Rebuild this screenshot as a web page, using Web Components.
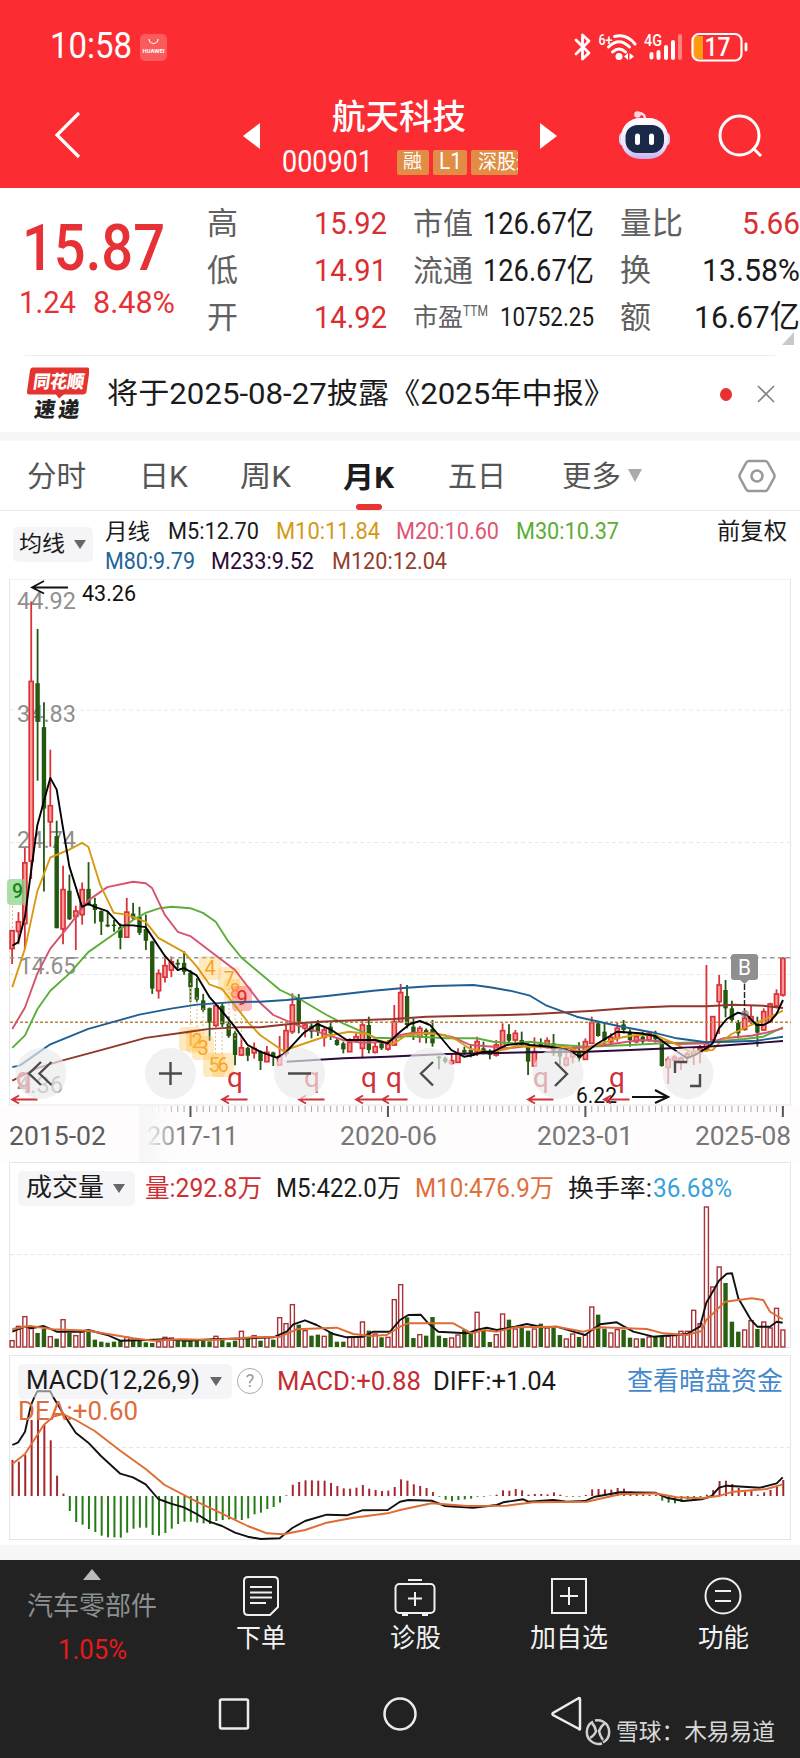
<!DOCTYPE html>
<html lang="zh-CN">
<head>
<meta charset="utf-8">
<title>航天科技 000901</title>
<style>
    body {
        margin: 0;
        width: 800px;
        background: #fff;
        color: #1b1b1b;
        font-family: Roboto, "Noto Sans CJK SC", sans-serif;
        overflow-x: hidden;
    }
</style>
</head>
<body>
<stock-app></stock-app>

<script>
// Text squeezed or stretched to a fixed width: w = width, gap = left margin, s = font size
class FitText extends HTMLElement {
    constructor() {
        super();
        this.attachShadow({ mode: 'open' });
        this.shadowRoot.innerHTML = `
            <style>
                :host { display: block; flex: none; line-height: 1.2; white-space: nowrap; }
                span { display: inline-block; transform-origin: 0 50%; }
            </style>
            <span><slot></slot></span>
        `;
    }

    connectedCallback() {
        const width = Number(this.getAttribute('w'));
        if (this.hasAttribute('s')) this.style.fontSize = this.getAttribute('s') + 'px';
        if (this.hasAttribute('gap')) this.style.marginLeft = this.getAttribute('gap') + 'px';
        if (this.hasAttribute('c')) this.style.color = this.getAttribute('c');
        const span = this.shadowRoot.querySelector('span');
        const natural = span.getBoundingClientRect().width;
        this.style.width = width + 'px';
        if (natural) span.style.transform = `scaleX(${width / natural})`;
    }
}

class StatusBar extends HTMLElement {
    constructor() {
        super();
        this.attachShadow({ mode: 'open' });
        this.shadowRoot.innerHTML = `
            <style>
                :host { display: flex; align-items: center; height: 92px; box-sizing: border-box; padding: 2px 52px 0 50px; background: #fb2d33; color: #fff; }
                .left, .right { display: flex; align-items: center; }
                .right { margin-left: auto; }
                svg { display: block; }
            </style>
            <div class="left">
                <fit-text w="82" s="36">10:58</fit-text>
                <svg width="27" height="27" viewBox="0 0 27 27" style="margin-left:8px">
                    <rect width="27" height="27" rx="5" fill="#fb5b5c"/>
                    <path d="M9 5a4.500 4.500 0 0 0 9 0" fill="none" stroke="#fff" stroke-width="1.200"/>
                    <text x="2.500" y="18.500" font-size="6" font-weight="700" fill="#fff" textLength="22" lengthAdjust="spacingAndGlyphs">HUAWEI</text>
                </svg>
            </div>
            <div class="right">
                <svg width="176" height="34" viewBox="571 29 176 34" fill="none" stroke="#fff">
                    <path d="M575 39l13 13-6.500 6V34l6.500 6-13 13" stroke-width="2.800" stroke-linejoin="round" stroke-linecap="round"/>
                    <text x="597.500" y="44" font-size="15" font-weight="500" fill="#fff" stroke="none" textLength="14" lengthAdjust="spacingAndGlyphs">6+</text>
                    <path d="M613.500 35.500q12-3 20.500 7.500M607.500 46q10.500-10.500 21 0M611.500 51q6.500-6 13 0" stroke-width="3" stroke-linecap="round"/>
                    <circle cx="618" cy="55.500" r="3.500" fill="#fff" stroke="none"/>
                    <path d="M627 52v7l-4-3.500zM628.500 52v7l4.500-3.500z" fill="#fff" stroke="none"/>
                    <text x="643" y="45" font-size="17" font-weight="500" fill="#fff" stroke="none" textLength="18" lengthAdjust="spacingAndGlyphs">4G</text>
                    <path d="M650.500 53v3.500M657.500 51v6M665 46v11M672 41v16" stroke-width="4" stroke-linecap="round"/>
                    <path d="M679 35v22" stroke="#ff8080" stroke-width="4" stroke-linecap="round"/>
                    <path d="M702 35h-6q-4 0-4 5v13q0 5 4 5h6z" fill="#ff9b12" stroke="none"/>
                    <rect x="691.500" y="33" width="49" height="26.500" rx="6.500" stroke-width="2.200"/>
                    <path d="M745 43v6" stroke-width="2.800" stroke-linecap="round"/>
                    <text x="703.500" y="55" font-size="25" font-weight="500" fill="#fff" stroke="none" textLength="26" lengthAdjust="spacingAndGlyphs">17</text>
                </svg>
            </div>
        `;
    }
}

class TitleBar extends HTMLElement {
    constructor() {
        super();
        this.attachShadow({ mode: 'open' });
        this.shadowRoot.innerHTML = `
            <style>
                :host { display: flex; align-items: flex-start; height: 96px; background: #fb2d33; color: #fff; box-sizing: border-box; padding-left: 54px; }
                svg { display: block; flex: none; }
                .name { width: 262px; padding-top: 6px; }
                .code { display: flex; align-items: center; height: 26px; margin-top: 13px; }
                .tag { flex: none; height: 25px; display: flex; align-items: center; background: #e18d45; border-radius: 2px; margin-right: 4px; overflow: hidden; }
            </style>
            <svg width="28" height="48" viewBox="0 0 28 48" style="margin-top:19px"><path d="M25 2L3 24l22 22" fill="none" stroke="#fff" stroke-width="3.200"/></svg>
            <svg width="17" height="26" viewBox="0 0 17 26" style="margin:31px 22px 0 161px"><path d="M17 0v26L0 13z" fill="#fff"/></svg>
            <div class="name">
                <fit-text w="134" s="34" gap="50" style="font-weight:500;line-height:38px">航天科技</fit-text>
                <div class="code">
                    <fit-text w="91" s="31" style="line-height:26px">000901</fit-text>
                    <div class="tag" style="width:32px;margin-left:24px"><fit-text w="19" s="19" gap="6">融</fit-text></div>
                    <div class="tag" style="width:34px"><fit-text w="23" s="23" gap="6">L1</fit-text></div>
                    <div class="tag" style="width:47px"><fit-text w="57" s="20" gap="7">深股通</fit-text></div>
                </div>
            </div>
            <svg width="17" height="26" viewBox="0 0 17 26" style="margin:31px 0 0 -4px"><path d="M0 0v26L17 13z" fill="#fff"/></svg>
            <svg width="54" height="52" viewBox="616 108 54 52" style="margin:17px 0 0 60px">
                <defs><linearGradient id="h" x1="0" y1="0" x2="0" y2="1"><stop offset="0" stop-color="#fff"/><stop offset=".7" stop-color="#e9e2ff"/><stop offset="1" stop-color="#c3b2ee"/></linearGradient></defs>
                <path d="M644 120q1-8-7-8" fill="none" stroke="#ffe3ea" stroke-width="2.500"/>
                <circle cx="636.500" cy="113.500" r="3.300" fill="#ffd3dc"/>
                <rect x="618" y="131" width="51" height="14" rx="5" fill="#dccdfa"/>
                <rect x="620" y="117" width="47" height="41" rx="19" fill="url(#h)"/>
                <rect x="624.500" y="124" width="38.500" height="28" rx="12" fill="#1b2948"/>
                <rect x="634" y="132.500" width="5" height="11.500" rx="2.500" fill="#fff"/><rect x="648" y="132.500" width="5" height="11.500" rx="2.500" fill="#fff"/>
            </svg>
            <svg width="46" height="46" viewBox="716 113 46 46" style="margin:21px 0 0 46px">
                <circle cx="738.500" cy="135.500" r="19.500" fill="none" stroke="#fff" stroke-width="3"/>
                <path d="M752 148l8 8" stroke="#fff" stroke-width="3"/>
            </svg>
        `;
    }
}

class QuotePanel extends HTMLElement {
    constructor() {
        super();
        this.attachShadow({ mode: 'open' });
        this.shadowRoot.innerHTML = `
            <style>
                :host { display: flex; height: 167px; box-sizing: border-box; padding-top: 12px; position: relative; font-size: 32px; }
                .price { width: 208px; color: #e63236; }
                .row, .change { display: flex; align-items: center; }
                .row { height: 47px; }
                .k { color: #606060; font-weight: 400; }
                .red { color: #d92f33; }
                .v { font-weight: 500; }
                i { position: absolute; right: 6px; bottom: 10px; border: solid; border-width: 0 0 13px 12px; border-color: transparent transparent #c9c9c9; }
            </style>
            <div class="price">
                <fit-text class="v" w="143" s="65" gap="22" style="line-height:96px">15.87</fit-text>
                <div class="change"><fit-text w="57" s="32" gap="19" style="line-height:12px">1.24</fit-text><fit-text w="82" s="32" gap="17" style="line-height:12px">8.48%</fit-text></div>
            </div>
            <div>
                <div class="row"><fit-text class="k" w="31" s="31">高</fit-text><fit-text class="red" w="73" gap="76">15.92</fit-text><fit-text class="k" w="60" s="30" gap="26">市值</fit-text><fit-text w="111" gap="10" s="31">126.67亿</fit-text><fit-text class="k" w="63" s="31" gap="26">量比</fit-text><fit-text class="red" w="58" gap="59">5.66</fit-text></div>
                <div class="row"><fit-text class="k" w="31" s="31">低</fit-text><fit-text class="red" w="73" gap="76">14.91</fit-text><fit-text class="k" w="60" s="30" gap="26">流通</fit-text><fit-text w="111" gap="10" s="31">126.67亿</fit-text><fit-text class="k" w="31" s="31" gap="26">换</fit-text><fit-text w="98" gap="51">13.58%</fit-text></div>
                <div class="row"><fit-text class="k" w="31" s="31">开</fit-text><fit-text class="red" w="73" gap="76">14.92</fit-text><fit-text class="k" w="50" s="25" gap="26">市盈</fit-text><fit-text class="k" w="25" s="14" style="margin-bottom:12px">TTM</fit-text><fit-text w="94" gap="12" s="26">10752.25</fit-text><fit-text class="k" w="31" s="31" gap="26">额</fit-text><fit-text w="106" gap="43">16.67亿</fit-text></div>
            </div>
            <i></i>
        `;
    }
}

class NewsRow extends HTMLElement {
    constructor() {
        super();
        this.attachShadow({ mode: 'open' });
        this.shadowRoot.innerHTML = `
            <style>
                :host { display: flex; align-items: center; height: 76px; margin: 0 25px; border-top: 1px solid #ededed; }
                .dot { width: 13px; height: 13px; border-radius: 50%; background: #e8302f; margin-left: 105px; }
                svg { flex: none; }
            </style>
            <svg width="64" height="56" viewBox="25 366 64 56">
                <path d="M33 367.500h54q3 0 2.500 3l-3 21q-.5 3-3.500 3H64l-5 4-3-4H30q-3.500 0-3-3l3-21q.5-3 3-3z" fill="#e5342f"/>
                <g font-family="Noto Sans CJK SC" font-weight="900" transform="skewX(-8)">
                    <text x="87" y="388" font-size="18" fill="#fff" textLength="51" lengthAdjust="spacingAndGlyphs">同花顺</text>
                    <text x="92" y="417" font-size="21" fill="#222" textLength="45">速递</text>
                </g>
            </svg>
            <fit-text w="508" s="29" gap="18"><slot></slot></fit-text>
            <div class="dot"></div>
            <svg width="18" height="18" style="margin-left:25px"><path d="M1 1l16 16M17 1L1 17" stroke="#858585" stroke-width="1.700"/></svg>
        `;
    }
}

class PeriodTabs extends HTMLElement {
    constructor() {
        super();
        this.attachShadow({ mode: 'open' });
        this.shadowRoot.innerHTML = `
            <style>
                :host { display: flex; align-items: center; height: 69px; border-top: 9px solid #f7f7f7; border-bottom: 1px solid #e9e9e9; color: #555; font-size: 29px; }
                fit-text { padding-top: 3px; }
                .on { height: 69px; display: flex; flex-direction: column; align-items: center; justify-content: space-between; color: #1c1c1c; font-weight: 700; margin-left: 52px; }
                .on::after { content: ""; width: 26px; height: 6px; border-radius: 3px; background: #e83234; }
                .on fit-text { line-height: 69px; height: 57px; }
                .more { border: solid transparent; border-width: 13px 7.500px 0; border-top-color: #aaa; margin-left: 7px; }
            </style>
            <fit-text w="59" gap="27">分时</fit-text>
            <fit-text w="49" gap="53">日K</fit-text>
            <fit-text w="51" gap="52">周K</fit-text>
            <div class="on"><fit-text w="51">月K</fit-text></div>
            <fit-text w="58" gap="54">五日</fit-text>
            <fit-text w="59" gap="56">更多</fit-text>
            <div class="more"></div>
            <svg width="38" height="34" viewBox="0 0 38 34" fill="none" stroke="#999" stroke-width="2.600" style="margin-left:96px">
                <path d="M11 2h16q2 0 3 2l6 11q1 2 0 4l-6 11q-1 2-3 2H11q-2 0-3-2L2 19q-1-2 0-4L8 4q1-2 3-2z"/><circle cx="19" cy="17" r="5.500"/>
            </svg>
        `;
    }
}

// Grey chip with a caret, used to pick an indicator
class PickChip extends HTMLElement {
    constructor() {
        super();
        this.attachShadow({ mode: 'open' });
        this.shadowRoot.innerHTML = `
            <style>
                :host { display: flex; flex: none; align-items: center; justify-content: space-between; box-sizing: border-box; height: 35px; padding: 0 10px 0 8px; background: #f5f4f6; border-radius: 5px; }
                i { border: solid transparent; border-width: 9px 6.500px 0; border-top-color: #666; }
            </style>
            <slot></slot><i></i>
        `;
    }
}

class MaLegend extends HTMLElement {
    constructor() {
        super();
        this.attachShadow({ mode: 'open' });
        this.shadowRoot.innerHTML = `
            <style>
                :host { display: flex; height: 68px; box-sizing: border-box; padding-left: 13px; font-size: 24px; }
                pick-chip { width: 80px; margin-top: 16px; padding: 0 7px 0 6px; }
                .row { display: flex; height: 29.500px; align-items: center; }
                .lines { margin: 6px 0 0 12px; }
            </style>
            <pick-chip><fit-text w="46" s="22">均线</fit-text></pick-chip>
            <div class="lines">
                <div class="row"><fit-text w="45" s="22">月线</fit-text><fit-text w="91" gap="18">M5:12.70</fit-text><fit-text w="104" gap="17" c="#d39a16">M10:11.84</fit-text><fit-text w="103" gap="16" c="#dd5674">M20:10.60</fit-text><fit-text w="103" gap="17" c="#5bad35">M30:10.37</fit-text><fit-text w="70" gap="98" s="23">前复权</fit-text></div>
                <div class="row"><fit-text w="90" c="#20649a">M80:9.79</fit-text><fit-text w="103" gap="16" c="#2b0b35">M233:9.52</fit-text><fit-text w="115" gap="18" c="#943d2d">M120:12.04</fit-text></div>
            </div>
        `;
    }
}

const FIRST_X = 12.100;
const STEP = 6.370;
const RED = '#d93338';
const GREEN = '#24570f';

// Monthly candles: colour, high, body top, body bottom, low
const EARLY = `r 1008 1010 1060 1103|r 958 985 1012 1048|r 778 820 990 1062|r 88 312 815 865|g 165 317 425 590|g 370 440 668 900|r 503 660 705 775|g 702 745 1003 1003|r 828 895 1005 1048|g 853 898 978 980|r 940 955 970 1064|r 875 895 965 993|g 818 893 935 940|g 918 935 952 990|g 953 955 985 1022|g 955 993 998 1000|g 980 993 997 1013|g 990 1000 1030 1062|r 918 958 1028 1028|g 932 962 975 980|g 943 970 1016 1022|g 965 1005 1038 1064|g 1038 1040 1172 1187|r 1118 1130 1178 1200|r 1080 1108 1140 1155|r 1082 1097 1120 1140|g 1090 1100 1105 1115|g 1067 1100 1125 1133|g 1120 1128 1168 1210|g 1143 1170 1203 1210|g 1187 1205 1232 1237|g 1225 1227 1268 1318|r 1215 1220 1275 1280|g 1210 1220 1272 1280|g 1250 1270 1305 1310|g 1290 1297 1358 1387|r 1308 1338 1358 1360|g 1335 1338 1360 1375|r 1323 1340 1352 1368|g 1345 1348 1375 1400`;
const LATER = `r 438 457 485 485|g 455 457 470 498|r 408 470 495 497|r 375 392 460 470|r 280 315 395 402|g 282 297 365 400|r 370 375 385 412|g 370 377 395 415|g 360 370 395 408|r 380 390 412 440|g 368 380 400 420|g 415 420 435 437|g 425 430 448 460|r 415 427 455 455|r 400 410 423 425|r 360 375 445 475|g 350 375 450 460|r 427 440 457 460|g 422 430 445 450|r 420 432 447 452|r 315 365 435 438|r 252 278 365 368|g 255 288 375 385|g 355 380 400 420|r 378 385 410 428|g 385 390 405 430|g 360 387 430 440|g 468 470 475 508|g 470 475 485 490|r 460 482 490 495|r 445 460 487 487|g 440 450 458 465|g 435 450 460 472|r 410 425 455 468|g 425 445 460 463|g 448 452 465 478|r 420 435 465 470|r 370 392 440 445|g 373 402 422 430|r 390 400 420 435|g 395 420 435 440|g 430 440 485 525|r 412 455 498 500|g 415 430 440 445|r 412 422 440 445|g 402 430 460 468|g 440 450 470 495|r 450 475 495 500|r 440 450 470 490|g 427 450 475 485|r 415 425 478 480|r 350 368 430 432|g 365 370 408 410|g 368 395 420 432|r 400 412 425 435|r 368 385 415 425|g 360 373 390 400|g 388 395 420 440|r 400 410 425 430|g 395 410 425 435|r 393 400 420 425|g 392 405 418 428|g 418 425 498 500|r 470 478 502 552|r 465 472 480 500|r 470 475 485 510|r 455 462 470 490|r 445 455 465 495|r 435 445 455 490|r 195 430 450 455|r 350 350 420 425|r 225 255 305 402|g 240 270 325 352|g 302 325 360 367|g 360 367 400 415|r 330 355 388 392|r 315 350 365 372|g 350 370 398 440|r 325 335 390 392|r 308 312 365 368|r 268 282 318 325|r 172 175 285 290`;

function readCandles(text, top, scale) {
    return text.split('|').map(row => {
        const [color, ...values] = row.split(' ');
        return [color, ...values.map(v => top + v / scale)];
    });
}

const CANDLES = [...readCandles(EARLY, 570, 2.800), ...readCandles(LATER, 900, 3)];
const colorAt = i => CANDLES[i][0] === 'r';

// Joins pieces of a curve, each with its own origin and scale
function curve(color, pieces, width = 1.900) {
    const points = [];
    for (const [x0, y0, sy, text] of pieces) {
        for (const pair of text.split(' ')) {
            const [x, y] = pair.split(',').map(Number);
            points.push(`${(x0 + x / 3).toFixed(1)},${(y0 + y / sy).toFixed(1)}`);
        }
    }
    return `<polyline points="${points.join(' ')}" fill="none" stroke="${color}" stroke-width="${width}" stroke-linejoin="round"/>`;
}

const label = (x, y, size, width, text, extra = '') =>
    `<text x="${x}" y="${y}" font-size="${size}" textLength="${width}" lengthAdjust="spacingAndGlyphs" ${extra}>${text}</text>`;

class PriceChart extends HTMLElement {
    constructor() {
        super();
        this.attachShadow({ mode: 'open' });
        this.shadowRoot.innerHTML = `
            <style>
                :host { display: block; height: 583px; }
                svg { display: block; }
            </style>
            <svg width="800" height="583" viewBox="0 579 800 583">${this.draw()}</svg>
        `;
    }

    draw() {
        let out = `<rect x="0" y="1106" width="800" height="56" fill="#fefcfd"/>
            <rect x="9.500" y="579" width="781" height="526" fill="#fff" stroke="#e6e6e6"/>
            <path d="M10 710h780M10 842.500h780M10 974.500h780" stroke="#e8e8e8" stroke-dasharray="4 3"/>
            <g fill="#8f8f8f">${label(17, 609, 24.500, 59, '44.92')}${label(17, 722, 24.500, 59, '34.83')}${label(17, 848, 24.500, 59, '24.74')}${label(19, 973.500, 24.500, 57, '14.65')}${label(17, 1092.500, 24.500, 46, '4.36')}</g>`;
        CANDLES.forEach(([color, high, top, bottom, low], i) => {
            const x = FIRST_X + STEP * i;
            const h = Math.max(bottom - top, 1.500);
            if (color === 'r') {
                out += `<path d="M${x} ${high}V${low}" stroke="${RED}" stroke-width="1.800"/><rect x="${x - 2}" y="${top}" width="4" height="${h}" fill="#ff9896" stroke="${RED}" stroke-width="1.700"/>`;
            } else {
                out += `<path d="M${x} ${high}V${low}" stroke="${GREEN}" stroke-width="1.800"/><rect x="${x - 2.200}" y="${top}" width="4.400" height="${h}" fill="${GREEN}"/>`;
            }
        });
        out += `<path d="M10 957.700h781" stroke="#999" stroke-width="1.400" stroke-dasharray="4.500 3.500"/>
            <path d="M10 1022.300h781" stroke="#b98442" stroke-width="1.400" stroke-dasharray="3 2"/>`;

        // Nine-turn counters
        out += '<path d="M12.500 906v24M190.500 983v44M197 997v30M203 1008v26M215.500 1032v22M222 1032v22M229 988v42M235 1006v34M241.500 1010v32" stroke="#e5bd84" stroke-width="1" stroke-dasharray="2 2"/>';
        out += `<rect x="7" y="879" width="19" height="26" rx="4" fill="#8ed68e" opacity=".75"/>${label(12, 898, 20, 11, '9', 'fill="#128a15" font-weight="500"')}`;
        const marks = [[4, 210, 968], [7, 229, 979], [8, 235, 991], [1, 190, 1039], [2, 197, 1041], [3, 203, 1048], [5, 214, 1065], [6, 223, 1065]];
        for (const [n, x, y] of marks) {
            out += `<rect x="${x - 11}" y="${y - 12}" width="22" height="24" rx="4" fill="#ffc65d" opacity=".38"/><text x="${x}" y="${y + 7}" font-size="20" text-anchor="middle" fill="#f7a421">${n}</text>`;
        }
        out += '<rect x="232" y="986" width="20" height="25" rx="4" fill="#ff6f70" opacity=".5"/><text x="242" y="1005" font-size="20" text-anchor="middle" fill="#e21f28">9</text>';

        out += curve('#5cae3b', [
            [0, 570, 2.800, '37,1338 75,1303 112,1230 151,1178 208,1130 265,1070 341,1020 399,980 437,960 480,947 515,943 571,947 609,960 647,985 685,1040 724,1085'],
            [260, 900, 3, '0,220 60,270 120,298 200,345 249,370 306,395 345,413 400,415 440,408 560,415 650,415 700,425 760,430 810,425'],
            [530, 900, 3, '60,433 170,440 300,435 400,430 529,427 643,417 700,410 759,382']]);
        out += curve('#d65370', [
            [0, 570, 2.800, '37,1285 75,1225 112,1130 151,1060 208,995 265,925 322,888 399,873 437,877 456,890 494,965 533,1013 571,1025 628,1065 705,1120'],
            [260, 900, 3, '0,308 40,345 110,375 172,395 249,420 306,428 383,425 421,405 460,398 520,400 580,412 631,435 700,440 746,445 810,437'],
            [530, 900, 3, '100,447 180,440 261,430 330,420 414,425 450,432 529,430 580,415 663,407 700,400 759,385']]);
        out += curve('#d89a13', [
            [0, 570, 2.800, '37,1168 75,1060 112,900 151,805 208,783 246,764 265,775 300,880 341,960 380,965 437,985 475,1030 552,1070 590,1110 628,1160 666,1173 743,1265'],
            [260, 900, 3, '0,405 70,453 120,435 200,408 268,395 325,402 350,420 400,432 440,405 498,400 555,405 590,420 631,447 688,457 740,447 770,437 810,440'],
            [530, 900, 3, '60,440 110,440 150,455 200,435 261,415 319,405 376,405 433,430 480,455 548,450 567,430 605,402 663,375 700,360 759,332']]);
        out += curve('#1f5f94', [
            [0, 570, 2.800, '37,1392 60,1387 151,1328 265,1285 322,1270 418,1245 513,1228 590,1217 700,1210'],
            [260, 900, 3, '0,305 80,300 200,288 340,272 440,263 520,258 640,255 690,262 750,272 810,287'],
            [530, 900, 3, '50,317 140,350 261,377 380,400 440,415 529,427 600,425 680,422 759,410']]);
        out += curve('#8f382b', [
            [0, 570, 2.800, '37,1430 112,1395 180,1375 300,1345 437,1310 552,1295 628,1285 724,1280'],
            [260, 900, 3, '0,382 90,372 180,365 249,362 400,357 500,350 630,347 740,345 810,343'],
            [530, 900, 3, '180,333 300,324 420,319 529,319 610,314 700,317 759,324']]);
        out += curve('#2c0a3a', [
            [260, 900, 3, '80,485 250,475 383,470 555,462 680,460 810,457'],
            [530, 900, 3, '170,455 300,450 529,440 643,432 759,423']]);
        out += curve('#000', [
            [0, 570, 2.800, '37,1052 55,1042 75,970 112,715 131,650 151,582 170,615 208,830 246,943 265,935 284,943 322,955 361,995 399,995 437,1000 494,1080 533,1120 552,1115 590,1135 628,1195 666,1235 705,1280 743,1330'],
            [260, 900, 3, '0,455 50,473 75,460 130,400 172,372 211,388 260,420 306,420 345,420 383,430 421,395 450,372 480,363 510,375 536,405 574,450 612,470 640,465 670,455 700,455 740,435 790,430 810,435'],
            [530, 900, 3, '60,440 110,450 150,470 200,432 261,395 330,400 376,408 420,440 471,475 500,462 529,445 548,430 567,385 590,357 624,338 650,345 680,375 701,375 720,365 739,343 759,300']]);

        // Extremes
        out += `${label(82, 601, 21.500, 54, '43.26', 'fill="#111"')}<path d="M68 587.500H32M44 581l-12 6.500 12 6" fill="none" stroke="#111" stroke-width="1.800"/>`;
        out += `${label(576, 1102.500, 21.500, 41, '6.22', 'fill="#111"')}<path d="M632 1097h35M655 1090l13 7-13 6" fill="none" stroke="#111" stroke-width="2.200"/>`;

        // Dividend marks
        for (const [textX, arrowX] of [[16, 12], [227, 222], [304, 299], [361, 356], [386, 382], [533, 528], [609, 604]]) {
            out += `<text x="${textX}" y="1087" font-size="28" fill="#cf333a">q</text><path d="M${arrowX + 25.500} 1099.500h-25M${arrowX + 7} 1095.500l-7 4 7 4" fill="none" stroke="#cf333a" stroke-width="1.800"/>`;
        }

        // Buy marker
        out += `<path d="M744.500 984v26" stroke="#222" stroke-width="1.400" stroke-dasharray="6 2"/><circle cx="745" cy="1014" r="4" fill="#777" opacity=".6"/>
            <path d="M734 954h21q3 0 3 3v20q0 3-3 3h-6l-4.500 4-4.500-4h-6q-3 0-3-3v-20q0-3 3-3z" fill="#8f8f8f"/>${label(738, 975, 22, 13, 'B', 'fill="#fff"')}`;

        // Chart tools
        for (const x of [41, 170.500, 299.500, 429, 558, 688]) {
            out += `<circle cx="${x}" cy="1073.500" r="25.500" fill="#eaeaec" opacity=".68"/>`;
        }
        out += `<g fill="none" stroke="#4b4b4d" stroke-width="2.400">
            <path d="M41 1062l-12 11.500 12 11.500M51.500 1062l-12 11.500 12 11.500M159 1073.500h23M170.500 1062v23M288 1073.500h23M433 1062l-12 11.500 12 12M555 1062l12 12-12 12M675 1073v-11h12M690 1086h10v-12"/></g>`;

        // Month ticks
        for (let i = 22; i <= 121; i++) {
            const major = i % 31 === 28;
            out += `<path d="M${FIRST_X + STEP * i} 1106v${major ? 11 : 6}" stroke="${major ? '#555' : '#aaa'}" stroke-width="${major ? 2 : 1}" opacity="${i < 25 ? 0.400 : 1}"/>`;
        }
        out += `<g fill="#777">${label(9, 1144.500, 25, 97, '2015-02', 'fill="#5c5c5c"')}${label(147, 1144.500, 25, 91, '2017-11')}${label(340, 1144.500, 25, 97, '2020-06')}${label(537, 1144.500, 25, 96, '2023-01')}${label(695, 1144.500, 25, 96, '2025-08')}</g>
            <defs><linearGradient id="fade"><stop offset="0" stop-color="#f8f7f8"/><stop offset=".3" stop-color="#f8f7f8" stop-opacity=".85"/><stop offset="1" stop-color="#fefcfd" stop-opacity="0"/></linearGradient></defs>
            <rect x="139" y="1106" width="42" height="56" fill="url(#fade)"/>`;
        return out;
    }
}

const VOLUME = '19 62 91 59 42 54 31 25 82 42 34 45 45 22 16 13 16 19 29 19 22 14 12 16 29 27 19 19 19 19 19 17 32 27 14 19 47 24 34 19 30 22 88 70 127 67 49 34 37 32 45 16 16 30 30 75 49 39 29 29 142 187 89 27 37 34 90 34 27 27 36 52 42 104 57 15 37 99 82 54 57 49 54 70 57 57 36 24 39 30 36 120 97 55 42 52 52 28 24 26 30 30 32 32 34 47 47 110 70 420 180 240 192 76 46 51 79 54 75 57 116 51'.split(' ').map(Number);

const PANEL_CSS = `
    :host { display: grid; font-size: 25px; }
    svg, .head { grid-area: 1 / 1; }
    svg { display: block; }
    .head { display: flex; align-items: center; padding-left: 18px; height: 34px; }
    .head > fit-text { padding-top: 2px; }
`;

class VolumeChart extends HTMLElement {
    constructor() {
        super();
        this.attachShadow({ mode: 'open' });
        const bars = VOLUME.map((v, i) => {
            const x = FIRST_X + STEP * i - 2;
            return colorAt(i)
                ? `<rect x="${x}" y="${1347 - v / 3}" width="4" height="${v / 3}" fill="#fff" stroke="#a93238" stroke-width="1.400"/>`
                : `<rect x="${x - 0.200}" y="${1347 - v / 3}" width="4.400" height="${v / 3}" fill="#286010"/>`;
        }).join('');
        this.shadowRoot.innerHTML = `
            <style>
                ${PANEL_CSS}
                .head { margin-top: 9px; }
            </style>
            <svg width="800" height="193" viewBox="0 1162 800 193">
                <rect x="9.500" y="1162.500" width="781" height="185" fill="none" stroke="#e6e6e6"/>
                <path d="M10 1254.500h780" stroke="#e6e6e6" stroke-dasharray="4 3"/>
                ${bars}
                ${curve('#111', [
                    [0, 1080, 3, '37,755 75,740 93,745 131,738 170,755 246,755 265,750 322,765 361,782 440,780 500,778 560,782 640,778 750,775 820,772 860,755 880,733 915,721 950,735 1000,762 1040,772 1090,770 1120,755 1170,755'],
                    [400, 1150, 3, '0,510 25,495 62,494 85,520 115,545 200,550 230,540 260,533 290,540 345,530 380,522 430,532 470,530 555,555 600,523 650,517 700,545 760,560 860,552 900,530 919,458 957,392 980,371 996,370 1015,445 1053,510 1072,530 1110,530 1130,515 1148,518']])}
                ${curve('#df6c34', [
                    [0, 1080, 3, '37,747 90,738 160,748 265,752 400,775 460,782 540,778 640,780 760,772 840,770 890,748 1010,743 1060,762 1110,768 1160,765'],
                    [400, 1150, 3, '0,530 25,520 160,520 215,550 250,540 290,545 345,532 470,530 550,545 600,532 740,537 790,550 860,555 905,543 919,510 975,455 1055,445 1090,450 1110,485 1148,508']])}
            </svg>
            <div class="head">
                <pick-chip style="width:117px"><fit-text w="78">成交量</fit-text></pick-chip>
                <fit-text w="117" gap="10" c="#cf2f32">量:292.8万</fit-text>
                <fit-text w="125" gap="14">M5:422.0万</fit-text>
                <fit-text w="139" gap="14" c="#e0703a">M10:476.9万</fit-text>
                <fit-text w="84" gap="14">换手率:</fit-text>
                <fit-text w="79" gap="1" c="#39a2dc">36.68%</fit-text>
            </div>
        `;
    }
}

const MACD = '330 335 315 210 183 225 271 377 431 483 516 524 537 546 557 562 562 563 548 536 533 533 555 557 549 536 522 515 515 518 520 522 513 510 508 508 510 505 493 488 477 471 458 436 404 396 391 391 392 392 399 408 415 416 413 405 416 420 423 422 411 388 392 403 408 414 426 440 449 454 450 448 446 440 440 437 434 421 422 417 421 434 432 432 433 427 434 440 440 440 435 418 417 418 419 414 416 424 430 433 434 435 452 458 460 456 448 442 441 434 420 393 392 402 414 425 420 434 427 420 410 390'.split(' ').map(Number);

class MacdChart extends HTMLElement {
    constructor() {
        super();
        this.attachShadow({ mode: 'open' });
        const bars = MACD.map((v, i) => {
            const x = FIRST_X + STEP * i + 0.400;
            return `<path d="M${x} 1496V${1350 + v / 3}" stroke="${v < 439 ? '#a5262b' : '#247a14'}" stroke-width="2"/>`;
        }).join('');
        this.shadowRoot.innerHTML = `
            <style>
                ${PANEL_CSS}
                .head { margin-top: 9px; }
                .dea { margin-left: 18px; padding-top: 2px; line-height: 24px; }
                .help { display: grid; place-items: center; box-sizing: border-box; width: 26px; height: 26px; margin-left: 5px; border: 1.500px solid #aaa; border-radius: 50%; color: #999; font-size: 18px; line-height: 1; }
                .top { grid-area: 1 / 1; }
            </style>
            <div class="top">
                <div class="head">
                    <pick-chip style="width:214px"><fit-text w="174">MACD(12,26,9)</fit-text></pick-chip>
                    <span class="help">?</span>
                    <fit-text w="144" gap="14" c="#c62c32">MACD:+0.88</fit-text>
                    <fit-text w="123" gap="12">DIFF:+1.04</fit-text>
                    <fit-text w="156" gap="71" s="26" c="#4488cb">查看暗盘资金</fit-text>
                </div>
                <fit-text class="dea" w="120" c="#df6c3a">DEA:+0.60</fit-text>
            </div>
            <svg width="800" height="190" viewBox="0 1355 800 190">
                <rect x="9.500" y="1355.500" width="781" height="184" fill="none" stroke="#e6e6e6"/>
                <path d="M10 1447.500h780" stroke="#e6e6e6" stroke-dasharray="4 3"/>
                ${bars}
                ${curve('#111', [[0, 1350, 3, '37,285 55,277 75,245 93,165 103,142']])}
                ${curve('#8c8c8c', [[0, 1350, 3, '103,142 112,124 151,124 160,142']])}
                ${curve('#111', [
                    [0, 1350, 3, '160,142 189,190 227,248 265,278 303,318 361,371 399,382 437,403 475,447 513,461 552,472 590,492 628,515 666,528 705,548 743,560 782,567 839,565 877,534 915,513 980,494 1040,496 1087,481 1163,480'],
                    [400, 1350, 3, '0,455 25,450 95,452 135,468 220,473 290,465 310,457 370,448 385,455 460,450 500,455 555,453 585,440 660,427 765,428 800,443 850,453 905,448 935,438 957,413 980,407 1080,413 1130,400 1148,382']])}
                ${curve('#df6c34', [
                    [0, 1350, 3, '37,342 75,312 131,225 160,200 189,192 227,210 284,243 361,302 437,357 494,405 590,455 685,500 743,528 801,550 850,553 915,540 980,518 1060,503 1163,490'],
                    [400, 1350, 3, '0,480 95,460 200,468 320,467 400,457 560,455 660,433 765,430 830,442 905,445 960,437 1000,425 1100,417 1148,403']])}
            </svg>
        `;
    }
}

class ActionBar extends HTMLElement {
    constructor() {
        super();
        this.attachShadow({ mode: 'open' });
        this.shadowRoot.innerHTML = `
            <style>
                :host { display: flex; height: 105px; background: #222; color: #f2f2f2; border-top: 15px solid #f7f7f7; }
                .sector { width: 184px; display: flex; flex-direction: column; align-items: center; }
                .sector i { border: solid transparent; border-width: 0 9.500px 11px; border-bottom-color: #bbb; margin-top: 9px; }
                .item { width: 154px; display: flex; flex-direction: column; align-items: center; padding-top: 15px; }
                .item fit-text { line-height: 42px; }
                svg { fill: none; stroke: #f0f0f0; stroke-width: 2; }
            </style>
            <div class="sector"><i></i><fit-text w="130" s="26" c="#8b9090" style="line-height:53px">汽车零部件</fit-text><fit-text w="69" s="28" c="#e51a1c" style="line-height:34px">1.05%</fit-text></div>
            <div class="item"><svg width="42" height="42"><path d="M8 2h26q4 0 4 4v26l-8 8H8q-4 0-4-4V6q0-4 4-4zM10 12h22M10 17.500h22M10 22.500h22M10 28h16"/></svg><fit-text w="50" s="26">下单</fit-text></div>
            <div class="item"><svg width="42" height="42"><rect x="1.500" y="9" width="39" height="29" rx="4"/><path d="M14 5h14M14 23.500h14M21 17v14"/><path d="M8 39.500h6M28 39.500h6" stroke-width="3"/></svg><fit-text w="51" s="26">诊股</fit-text></div>
            <div class="item"><svg width="42" height="42"><path d="M4 4h34v34H4zM12 21h18M21 12v18"/></svg><fit-text w="78" s="26">加自选</fit-text></div>
            <div class="item"><svg width="42" height="42"><circle cx="21" cy="21" r="17.500"/><path d="M13 16h16M13 26h16"/></svg><fit-text w="51" s="26">功能</fit-text></div>
        `;
    }
}

class SystemNav extends HTMLElement {
    constructor() {
        super();
        this.attachShadow({ mode: 'open' });
        this.shadowRoot.innerHTML = `
            <style>
                :host { display: flex; align-items: center; height: 93px; background: #222; color: #d8d8d8; }
                svg { flex: none; fill: none; stroke: #ececec; stroke-width: 2.500; }
                .mark { margin: 41px 0 0 0; stroke: #d0d0d0; }
                fit-text { margin-top: 42px; }
            </style>
            <svg width="34" height="36" style="margin:4px 0 0 217px"><rect x="3" y="3.500" width="28" height="29" rx="1.500"/></svg>
            <svg width="36" height="36" style="margin:4px 0 0 131px"><circle cx="18" cy="18" r="15.500"/></svg>
            <svg width="34" height="38" style="margin:4px 0 0 132px"><path d="M30 4v30q0 1-1 0L3 20q-1-1 0-2L29 3q1 0 1 1z"/></svg>
            <svg class="mark" width="28" height="28"><path d="M9 3.500a12 12 0 0 0 0 21M19 3.500a12 12 0 0 1 0 21M11 2.500a12 12 0 0 1 8 1M9 24.500a12 12 0 0 0 9 1"/><path d="M8 5q3 3 4 8-1 4-6 7M21 5q-4 3-6 8 1 5 4 9"/></svg>
            <fit-text w="159" s="23" gap="4">雪球：木易易道</fit-text>
        `;
    }
}

class StockApp extends HTMLElement {
    constructor() {
        super();
        this.attachShadow({ mode: 'open' });
        this.shadowRoot.innerHTML = `
            <style>
                :host { display: block; width: 800px; height: 1758px; overflow: hidden; }
            </style>
            <status-bar></status-bar>
            <title-bar></title-bar>
            <quote-panel></quote-panel>
            <news-row>将于2025-08-27披露《2025年中报》</news-row>
            <period-tabs></period-tabs>
            <ma-legend></ma-legend>
            <price-chart></price-chart>
            <volume-chart></volume-chart>
            <macd-chart></macd-chart>
            <action-bar></action-bar>
            <system-nav></system-nav>
        `;
    }
}

customElements.define('fit-text', FitText);
customElements.define('pick-chip', PickChip);
customElements.define('status-bar', StatusBar);
customElements.define('title-bar', TitleBar);
customElements.define('quote-panel', QuotePanel);
customElements.define('news-row', NewsRow);
customElements.define('period-tabs', PeriodTabs);
customElements.define('ma-legend', MaLegend);
customElements.define('price-chart', PriceChart);
customElements.define('volume-chart', VolumeChart);
customElements.define('macd-chart', MacdChart);
customElements.define('action-bar', ActionBar);
customElements.define('system-nav', SystemNav);
customElements.define('stock-app', StockApp);
</script>
</body>
</html>
